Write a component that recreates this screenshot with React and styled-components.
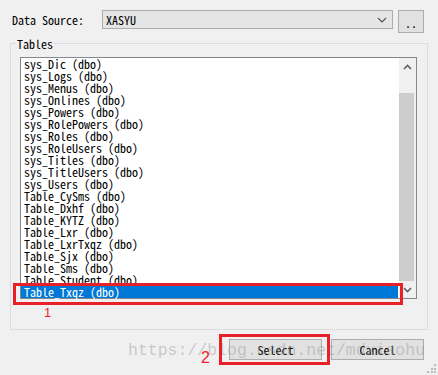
import React from "react";
import styled, { createGlobalStyle } from "styled-components";

const GlobalStyle = createGlobalStyle`
  html, body { margin: 0; padding: 0; background: #f0f0f0; }
  body { font-family: "Noto Sans Mono CJK SC", "Liberation Mono", monospace; }
  * { box-sizing: border-box; }
`;

const Window = styled.div`
  position: relative;
  width: 438px;
  height: 375px;
  overflow: hidden;
  background: #f0f0f0;
  padding-top: 10px;
  font-family: "Noto Sans Mono CJK SC", "Liberation Mono", monospace;
  font-size: 12px;
  color: #000;
`;

const TopRow = styled.div`
  display: flex;
  align-items: flex-start;
  padding-left: 12px;
`;

const Label = styled.div`
  width: 90px;
  height: 19px;
  line-height: 19px;
  white-space: nowrap;
`;

const Combo = styled.div`
  width: 291px;
  height: 19px;
  border: 1px solid #adadad;
  background: #e5e5e5;
  display: flex;
  align-items: center;
  justify-content: space-between;
  padding: 0 5px 0 3px;
  line-height: 17px;
`;

const WinButton = styled.div`
  width: ${(p) => p.$w}px;
  height: ${(p) => p.$h}px;
  border: 1px solid #adadad;
  background: #e1e1e1;
  display: flex;
  align-items: center;
  justify-content: center;
  line-height: 12px;
`;

const DotsButton = styled(WinButton)`
  margin-left: 5px;
  padding-top: 3px;
`;

const GroupBox = styled.div`
  margin: 10px 10px 0 10px;
  height: 287px;
  border: 1px solid #dcdcdc;
`;

const Legend = styled.div`
  width: fit-content;
  margin: -6px 0 0 5px;
  padding: 0 1px;
  line-height: 12px;
  background: #f0f0f0;
`;

const ListBox = styled.div`
  margin: 7px 0 0 9px;
  width: 397px;
  height: 242px;
  border: 1px solid #828790;
  background: #fff;
  display: flex;
`;

const Items = styled.div`
  flex: 1;
  display: flex;
  flex-direction: column;
`;

const Row = styled.div`
  height: 12px;
  line-height: 12px;
  padding-left: 3px;
  margin-right: 1px;
  white-space: nowrap;
  background: ${(p) => (p.$selected ? "#0078d7" : "transparent")};
  color: ${(p) => (p.$selected ? "#fff" : "#000")};
`;

const ScrollBar = styled.div`
  width: 17px;
  background: #f0f0f0;
  display: flex;
  flex-direction: column;
`;

const ArrowBtn = styled.div`
  height: 17px;
  display: flex;
  align-items: center;
  justify-content: center;
`;

const Track = styled.div`
  height: ${(p) => p.$h}px;
`;

const Thumb = styled.div`
  height: 188px;
  margin: 0 2px 0 0;
  background: #cdcdcd;
`;

const ButtonRow = styled.div`
  display: flex;
  justify-content: flex-end;
  gap: 9px;
  padding-right: 14px;
  margin-top: 9px;
`;

const RedBox = styled.div`
  position: absolute;
  left: ${(p) => p.$x}px;
  top: ${(p) => p.$y}px;
  width: ${(p) => p.$w}px;
  height: ${(p) => p.$h}px;
  border: 3px solid #e8202a;
  pointer-events: none;
`;

const Mark = styled.div`
  position: absolute;
  left: ${(p) => p.$x}px;
  top: ${(p) => p.$y}px;
  font-family: "Liberation Sans", Arial, sans-serif;
  font-size: ${(p) => p.$size}px;
  color: #f02030;
  line-height: 1;
`;

const Watermark = styled.div`
  position: absolute;
  left: 128px;
  top: 341px;
  font-family: "Liberation Mono", monospace;
  font-size: 16.5px;
  color: rgba(150, 150, 150, 0.45);
  white-space: nowrap;
  pointer-events: none;
`;

const Grip = styled.svg`
  position: absolute;
  right: 1px;
  bottom: 1px;
`;

const tables = [
  "sys_Dic", "sys_Logs", "sys_Menus", "sys_Onlines", "sys_Powers",
  "sys_RolePowers", "sys_Roles", "sys_RoleUsers", "sys_Titles",
  "sys_TitleUsers", "sys_Users", "Table_CySms", "Table_Dxhf", "Table_KYTZ",
  "Table_Lxr", "Table_LxrTxqz", "Table_Sjx", "Table_Sms", "Table_Student",
  "Table_Txqz",
];

const Chevron = ({ up }) => (
  <svg width="9" height="6" viewBox="0 0 9 6">
    <path
      d={up ? "M1 5 L4.5 1.5 L8 5" : "M1 1 L4.5 4.5 L8 1"}
      fill="none"
      stroke="#606060"
      strokeWidth="1.6"
    />
  </svg>
);

export default function App() {
  return (
    <>
      <GlobalStyle />
      <Window>
        <TopRow>
          <Label>Data Source:</Label>
          <Combo>
            <span>XASYU</span>
            <svg width="10" height="6" viewBox="0 0 10 6">
              <path d="M1 1 L5 5 L9 1" fill="none" stroke="#505050" strokeWidth="1.1" />
            </svg>
          </Combo>
          <DotsButton $w={26} $h={23}>..</DotsButton>
        </TopRow>
        <GroupBox>
          <Legend>Tables</Legend>
          <ListBox>
            <Items>
              {tables.map((t, i) => (
                <Row key={t} $selected={i === tables.length - 1}>
                  {t} (dbo)
                </Row>
              ))}
            </Items>
            <ScrollBar>
              <ArrowBtn><Chevron up /></ArrowBtn>
              <Track $h={18} />
              <Thumb />
              <ArrowBtn><Chevron /></ArrowBtn>
            </ScrollBar>
          </ListBox>
        </GroupBox>
        <ButtonRow>
          <WinButton $w={93} $h={21}>Select</WinButton>
          <WinButton $w={93} $h={21}>Cancel</WinButton>
        </ButtonRow>

        <Watermark>https://blog.csdn.net/mdxiaohu</Watermark>
        <RedBox $x={13} $y={283} $w={390} $h={22} />
        <Mark $x={44} $y={306} $size={13}>1</Mark>
        <RedBox $x={219} $y={334} $w={111} $h={31} />
        <Mark $x={201} $y={350} $size={16}>2</Mark>
        <Grip width="10" height="10" viewBox="0 0 10 10">
          <g fill="#bcbcbc">
            <rect x="7" y="0" width="2" height="2" />
            <rect x="4" y="4" width="2" height="2" />
            <rect x="7" y="4" width="2" height="2" />
            <rect x="0" y="7" width="2" height="2" />
            <rect x="4" y="7" width="2" height="2" />
            <rect x="7" y="7" width="2" height="2" />
          </g>
        </Grip>
      </Window>
    </>
  );
}
